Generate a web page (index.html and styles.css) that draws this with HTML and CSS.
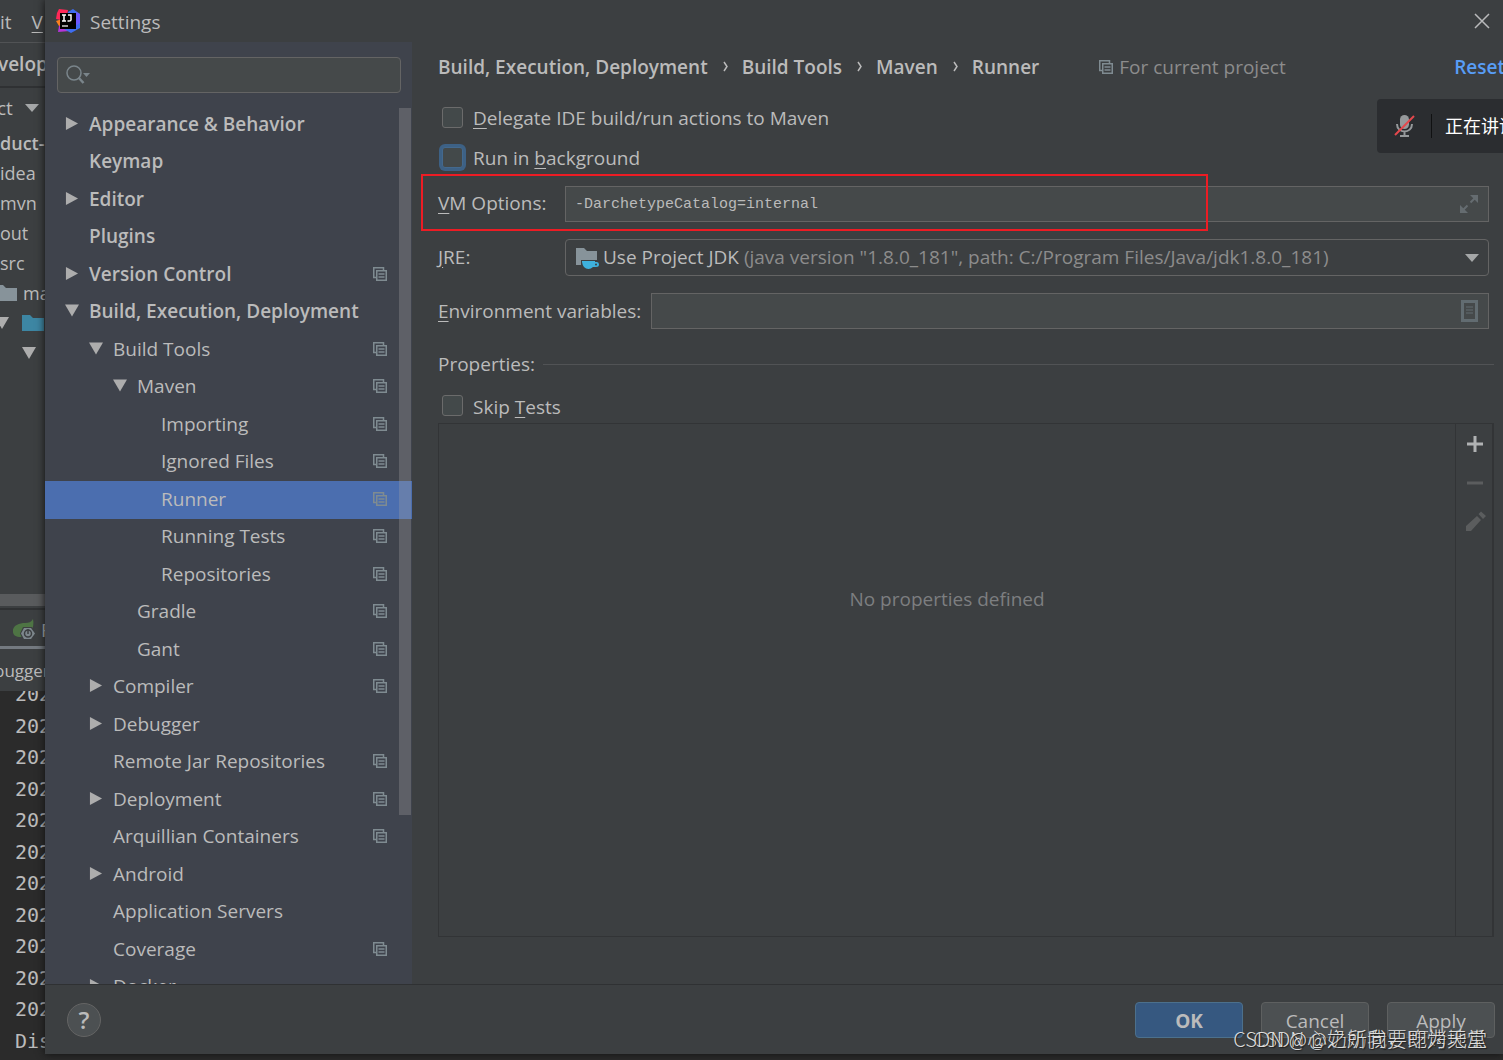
FILE: index.html
```html
<!DOCTYPE html>
<html lang="en">
<head>
<meta charset="utf-8">
<title>Settings</title>
<link rel="stylesheet" href="styles.css">
</head>
<body>
<svg class="defs" aria-hidden="true">
  <symbol id="i-right" viewBox="0 0 13 14"><path d="M0 0L13 7L0 14Z" fill="#adadad"/></symbol>
  <symbol id="i-down" viewBox="0 0 14 12"><path d="M0 0H14L7 12Z" fill="#adadad"/></symbol>
  <symbol id="i-small-down" viewBox="0 0 14 8"><path d="M0 0H14L7 8Z" fill="#a5a7a8"/></symbol>
  <symbol id="i-copy" viewBox="0 0 14 14"><path d="M3.500 10.500H.75V.75H10.500V3.500M3.750 3.750H13.250V13.250H3.750ZM5.500 7H11.500M5.500 10H11.500" fill="none" stroke="#7f8b91" stroke-width="1.500"/></symbol>
  <symbol id="i-folder" viewBox="0 0 22 16"><path d="M0 0H8L11 3H22V16H0Z"/></symbol>
</svg>
<div class="app">
  <div class="ide" aria-hidden="true">
    <div class="menu"><span>it</span><u>V</u></div>
    <div class="crumb">velop</div>
    <div class="project">
      <div class="tool-title"><span>ct</span><svg width="14" height="8"><use href="#i-small-down"/></svg></div>
      <div class="file bold">duct-</div>
      <div class="file">idea</div>
      <div class="file">mvn</div>
      <div class="file">out</div>
      <div class="file">src</div>
      <div class="file"><svg class="gray-folder" width="17" height="16" viewBox="5 0 17 16"><path d="M0 0H8L11 3H22V16H0Z"/></svg><span class="after">ma</span></div>
      <div class="file"><svg width="9" height="12" viewBox="5 0 9 12"><path d="M0 0H14L7 12Z" fill="#adadad"/></svg><svg class="blue-folder" width="22" height="16"><use href="#i-folder"/></svg></div>
      <div class="file deep"><svg width="14" height="12"><use href="#i-down"/></svg></div>
    </div>
    <div class="hscroll"></div>
    <div class="run-tab">
      <svg width="24" height="22" viewBox="0 0 24 22"><path d="M1 13C0 6 8 4 13 4C17 4 19 3 21 0C23 9 18 18 9 18C4 18 1 16 1 13Z" fill="#4e7444"/><path d="M11 8H20L24 14.500L20 21H11L8 14.500Z" fill="#3c3f41"/><path d="M12 9H19L23 14.500L19 20H12L9 14.500Z" fill="#7d878c"/><circle cx="16" cy="14.500" r="3.500" fill="none" stroke="#3c3f41" stroke-width="1.500"/><path d="M16 10V15" stroke="#3c3f41" stroke-width="1.500"/></svg>
      <span>F</span>
    </div>
    <div class="debugger">bugger</div>
    <div class="console">
      <div>202</div><div>202</div><div>202</div><div>202</div><div>202</div><div>202</div><div>202</div><div>202</div><div>202</div><div>202</div><div>202</div><div>Dis</div>
    </div>
  </div>

  <main class="dialog">
    <header class="titlebar">
      <svg width="24" height="24" viewBox="0 0 24 24"><path d="M3 0L12 1L10 12L0 10L1 4Z" fill="#fe2857"/><path d="M0 12L6 10L6 18L3 17Z" fill="#fc801d"/><path d="M3 17L10 14L14 22L2 23Z" fill="#b635d8"/><path d="M12 3L17 0L24 5V19L15 24L8 20Z" fill="#3e6df0"/><path d="M20 3L24 5V14L19 17Z" fill="#6b57ff"/><path d="M4 4H20V20H4Z" fill="#000"/><path d="M6 6H10M8 6V12M6 12H10M12 6H15V11Q15 12 13 12H11.500" fill="none" stroke="#fff" stroke-width="1.500"/><path d="M6 17H12" stroke="#ccc" stroke-width="1.500"/></svg>
      <h1>Settings</h1>
      <button class="close" aria-label="Close"><svg width="16" height="16" viewBox="0 0 16 16"><path d="M1 1L15 15M15 1L1 15" stroke="#b9babb" stroke-width="1.500"/></svg></button>
    </header>

    <div class="body">
      <nav class="sidebar" aria-label="Settings categories">
        <div class="search">
          <svg width="26" height="20" viewBox="0 0 26 20"><circle cx="8" cy="8" r="7" fill="none" stroke="#7a858b" stroke-width="1.500"/><path d="M12.500 12.500L17.500 18" stroke="#7a858b" stroke-width="2.500"/><path d="M17 8H24L20.500 12Z" fill="#7a858b"/></svg>
          <input type="text" aria-label="Search settings">
        </div>
        <ul class="tree">
          <li class="top"><svg class="arrow"><use href="#i-right"/></svg><span>Appearance &amp; Behavior</span></li>
          <li class="top"><i class="arrow"></i><span>Keymap</span></li>
          <li class="top"><svg class="arrow"><use href="#i-right"/></svg><span>Editor</span></li>
          <li class="top"><i class="arrow"></i><span>Plugins</span></li>
          <li class="top"><svg class="arrow"><use href="#i-right"/></svg><span>Version Control</span><svg class="copy"><use href="#i-copy"/></svg></li>
          <li class="top"><svg class="arrow"><use href="#i-down"/></svg><span>Build, Execution, Deployment</span></li>
          <li class="l1"><svg class="arrow"><use href="#i-down"/></svg><span>Build Tools</span><svg class="copy"><use href="#i-copy"/></svg></li>
          <li class="l2"><svg class="arrow"><use href="#i-down"/></svg><span>Maven</span><svg class="copy"><use href="#i-copy"/></svg></li>
          <li class="l3"><i class="arrow"></i><span>Importing</span><svg class="copy"><use href="#i-copy"/></svg></li>
          <li class="l3"><i class="arrow"></i><span>Ignored Files</span><svg class="copy"><use href="#i-copy"/></svg></li>
          <li class="l3 selected"><i class="arrow"></i><span>Runner</span><svg class="copy"><use href="#i-copy"/></svg></li>
          <li class="l3"><i class="arrow"></i><span>Running Tests</span><svg class="copy"><use href="#i-copy"/></svg></li>
          <li class="l3"><i class="arrow"></i><span>Repositories</span><svg class="copy"><use href="#i-copy"/></svg></li>
          <li class="l2"><i class="arrow"></i><span>Gradle</span><svg class="copy"><use href="#i-copy"/></svg></li>
          <li class="l2"><i class="arrow"></i><span>Gant</span><svg class="copy"><use href="#i-copy"/></svg></li>
          <li class="l1"><svg class="arrow"><use href="#i-right"/></svg><span>Compiler</span><svg class="copy"><use href="#i-copy"/></svg></li>
          <li class="l1"><svg class="arrow"><use href="#i-right"/></svg><span>Debugger</span></li>
          <li class="l1"><i class="arrow"></i><span>Remote Jar Repositories</span><svg class="copy"><use href="#i-copy"/></svg></li>
          <li class="l1"><svg class="arrow"><use href="#i-right"/></svg><span>Deployment</span><svg class="copy"><use href="#i-copy"/></svg></li>
          <li class="l1"><i class="arrow"></i><span>Arquillian Containers</span><svg class="copy"><use href="#i-copy"/></svg></li>
          <li class="l1"><svg class="arrow"><use href="#i-right"/></svg><span>Android</span></li>
          <li class="l1"><i class="arrow"></i><span>Application Servers</span></li>
          <li class="l1"><i class="arrow"></i><span>Coverage</span><svg class="copy"><use href="#i-copy"/></svg></li>
          <li class="l1"><svg class="arrow"><use href="#i-right"/></svg><span>Docker</span></li>
        </ul>
        <div class="thumb"></div>
      </nav>

      <section class="content">
        <div class="path">
          <b>Build, Execution, Deployment</b><svg class="sep" viewBox="0 0 6 12"><path d="M1 1L4 5.500L1 10" /></svg>
          <b>Build Tools</b><svg class="sep" viewBox="0 0 6 12"><path d="M1 1L4 5.500L1 10" /></svg>
          <b>Maven</b><svg class="sep" viewBox="0 0 6 12"><path d="M1 1L4 5.500L1 10" /></svg>
          <b>Runner</b>
          <span class="scope"><svg width="14" height="14"><use href="#i-copy"/></svg>For current project</span>
          <a class="reset" href="#">Reset</a>
        </div>
        <label class="check"><input type="checkbox"><span><u>D</u>elegate IDE build/run actions to Maven</span></label>
        <label class="check focus"><input type="checkbox"><span>Run in <u>b</u>ackground</span></label>

        <div class="row vm">
          <label class="name" for="vm"><u>V</u>M Options:</label>
          <div class="field"><input id="vm" class="mono" type="text" value="-DarchetypeCatalog=internal"><svg width="18" height="18" viewBox="0 0 18 18"><path d="M10 0H18V8ZM0 10L8 18H0Z" fill="#656c70"/><path d="M15 3L10.500 7.500M3 15L7.500 10.500" stroke="#656c70" stroke-width="2"/></svg></div>
        </div>
        <div class="row jre">
          <label class="name" for="jre"><u>J</u>RE:</label>
          <button id="jre" class="combo" aria-haspopup="listbox"><svg width="23" height="22" viewBox="0 0 23 22"><path d="M0 1H8L11 4H21V13H5V18H0Z" fill="#87939a"/><path d="M6 14H19V15H21Q23 15 23 17.500T20 20H17Q15 22 12.500 22Q7 22 6 15Z" fill="#3eb1dd"/><circle cx="20" cy="17.500" r="1" fill="#3c3f41"/></svg><span>Use Project JDK <em>(java version "1.8.0_181", path: C:/Program Files/Java/jdk1.8.0_181)</em></span><svg class="caret" width="14" height="8"><use href="#i-small-down"/></svg></button>
        </div>
        <div class="row env">
          <label class="name" for="env"><u>E</u>nvironment variables:</label>
          <div class="field"><input id="env" type="text"><svg width="17" height="22" viewBox="0 0 17 22"><path d="M1.500 1.500H15.500V20.500H1.500Z" fill="none" stroke="#626c71" stroke-width="3"/><path d="M5 7H12M5 10H12M5 13H12" stroke="#626c71"/></svg></div>
        </div>
        <h2 class="group">Properties:</h2>
        <label class="check skip"><input type="checkbox"><span>Skip <u>T</u>ests</span></label>
        <div class="props">
          <div class="empty">No properties defined</div>
          <div class="tools">
            <button aria-label="Add"><svg width="22" height="22" viewBox="0 0 22 22"><path d="M3 11H19M11 3V19" stroke="#b0b2b3" stroke-width="3"/></svg></button>
            <button aria-label="Remove" disabled><svg width="22" height="22" viewBox="0 0 22 22"><path d="M3 11H19" stroke="#5b5d5e" stroke-width="3"/></svg></button>
            <button aria-label="Edit" disabled><svg width="22" height="22" viewBox="0 0 22 22"><path d="M2 15L13 5L17 9L7 20H2ZM14.500 3L17 0.500L22 5L19 8Z" fill="#5b5d5e"/></svg></button>
          </div>
        </div>
      </section>
    </div>

    <footer class="footer">
      <button class="help" aria-label="Help">?</button>
      <button class="btn ok">OK</button>
      <button class="btn">Cancel</button>
      <button class="btn"><u>A</u>pply</button>
    </footer>
  </main>

  <div class="marker"></div>
  <aside class="meeting">
    <svg width="22" height="24" viewBox="0 0 22 24"><rect x="6" y="1" width="9" height="14" rx="4.500" fill="#96999b"/><path d="M3 10C3 20 18 20 18 10M10.500 17V21M6 22H15" fill="none" stroke="#96999b" stroke-width="2"/><path d="M1 21L20 2" stroke="#e5484d" stroke-width="2"/></svg>
    <span>正在讲话</span>
  </aside>
  <div class="watermark">CSDN @奶奶我要吃烤地瓜</div>
  <div class="watermark">CSDN @心之所向，即为天堂</div>
</div>
</body>
</html>
```
FILE: styles.css
```css
* { box-sizing: border-box; }
body {
  margin: 0;
  background: #2b2b2b;
  color: #bbbbbb;
  font: 19px/24px "Open Sans", "Noto Sans CJK SC", sans-serif;
}
h1, h2 { margin: 0; font: inherit; }
button, input { font: inherit; color: inherit; margin: 0; }
button { padding: 0; border: 0; background: none; }
svg { flex: none; display: block; }
u { text-underline-offset: 3px; }
.defs { position: absolute; width: 0; height: 0; }

.app {
  position: relative;
  display: flex;
  height: 100vh;
  min-height: 700px;
  overflow: hidden;
}

/* Editor window behind the dialog */
.ide {
  flex: none;
  width: 45px;
  overflow: hidden;
  display: flex;
  flex-direction: column;
  white-space: nowrap;
  background: #3c3f41;
}
.ide > * { flex: none; }
.menu { display: flex; gap: 20px; height: 43px; padding-top: 10px; border-bottom: 1px solid #515355; }
.crumb { height: 45px; margin-left: -2px; padding-top: 9px; border-bottom: 2px solid #2f3133; font-weight: 600; }
.project { height: 506px; padding-top: 5px; }
.tool-title { display: flex; align-items: center; gap: 12px; height: 35px; margin-left: -3px; padding-bottom: 5px; }
.file { display: flex; align-items: center; height: 30px; font-size: 18px; }
.bold { font-weight: 600; }
.after { margin-left: 6px; }
.deep { padding-left: 22px; }
.gray-folder { fill: #87939a; }
.blue-folder { fill: #3d86a3; margin-left: 13px; }
.hscroll { height: 16px; background: #3c3f41; border-top: 12px solid #595b5d; border-bottom: 2px solid #2f3133; }
.run-tab { display: flex; align-items: center; gap: 5px; height: 39px; padding: 4px 0 0 12px; border-bottom: 3px solid #747a80; }
.debugger { height: 42px; margin-left: -6px; padding-top: 10px; font-size: 17px; }
.console { height: 369px; overflow: hidden; padding-left: 15px; background: #2b2b2b; font: 20px/32px "DejaVu Sans Mono", monospace; }
.console div { height: 32px; }
.console div:nth-child(even) { height: 31px; }
.console div:first-child { margin-top: -13px; }

.dialog {
  flex: 1;
  min-width: 0;
  display: flex;
  flex-direction: column;
  margin-bottom: 6px;
  background: #3c3f41;
  box-shadow: 0 0 8px #111;
}
.titlebar { display: flex; align-items: center; flex: none; height: 42px; padding: 0 13px 0 11px; }
.titlebar h1 { margin-left: 10px; padding-top: 1px; }
.close { margin-left: auto; }
.body { flex: 1; min-height: 0; display: flex; }

.sidebar {
  position: relative;
  flex: none;
  width: 367px;
  display: flex;
  flex-direction: column;
  overflow: hidden;
  background: #3f434c;
}
.search {
  display: flex;
  align-items: center;
  flex: none;
  height: 36px;
  margin: 15px 11px 13px 12px;
  padding-left: 8px;
  border: 1px solid #646464;
  border-radius: 4px;
  background: #45494a;
}
.search input { flex: 1; min-width: 0; border: 0; background: none; outline: 0; }
.tree { list-style: none; margin: 0; padding: 0; }
.tree li { display: flex; align-items: center; height: 37px; padding-right: 25px; padding-bottom: 3px; white-space: nowrap; }
.tree li:nth-child(odd) { height: 38px; padding-bottom: 2px; }
.tree .arrow { flex: none; width: 14px; height: 13px; margin: 0 10px 2px 0; }
.tree .copy { width: 14px; height: 14px; margin-left: auto; }
.tree .top { padding-left: 20px; font-weight: 600; }
.tree .l1 { padding-left: 44px; }
.tree .l2 { padding-left: 68px; }
.tree .l3 { padding-left: 92px; }
.selected { background: #4b6eaf; }
.thumb { position: absolute; right: 1px; top: 66px; width: 12px; height: 75%; background: rgba(166, 166, 166, .3); }

.content {
  flex: 1;
  min-width: 0;
  display: flex;
  flex-direction: column;
  padding: 13px 9px 47px 26px;
}
.path { display: flex; align-items: center; height: 24px; margin-bottom: 19px; white-space: nowrap; }
.path b { font-weight: 600; }
.sep { width: 6px; height: 12px; margin: 0 13px 0 15px; fill: none; stroke: #bbbbbb; stroke-width: 1.5; }
.scope { display: flex; align-items: center; gap: 6px; margin-left: 60px; color: #8c8c8c; }
.reset { margin-left: auto; margin-right: -11px; color: #589df6; font-weight: 600; text-decoration: none; }
.check { display: flex; align-items: center; align-self: flex-start; gap: 10px; height: 40px; padding-left: 4px; }
.check input {
  appearance: none;
  width: 21px;
  height: 21px;
  margin-bottom: 2px;
  border: 1px solid #6b6b6b;
  border-radius: 3px;
  background: #43494a;
}
.focus input { box-shadow: 0 0 0 3px #3d6185; border-color: #43698e; }
.row { display: flex; align-items: center; margin-right: 5px; }
.name { flex: none; width: 127px; padding-bottom: 2px; white-space: nowrap; }
.field, .combo {
  flex: 1;
  min-width: 0;
  display: flex;
  align-items: center;
  height: 36px;
  border: 1px solid #646464;
}
.field { background: #45494a; padding-right: 10px; }
.field input { flex: 1; min-width: 0; padding: 0 9px; border: 0; background: none; outline: 0; }
.field .mono { padding-top: 2px; font: 15px/24px "Liberation Mono", monospace; }
.vm { margin-top: 8px; }
.jre { margin-top: 17px; }
.env { margin-top: 17px; }
.env .name { width: 213px; padding-bottom: 0; }
.combo { height: 37px; padding: 0 9px 0 10px; border-radius: 4px; text-align: left; white-space: nowrap; }
.combo span { margin-left: 4px; padding-bottom: 2px; }
.combo em { font-style: normal; color: #8c8c8c; }
.caret { margin-left: auto; }
.group { display: flex; align-items: center; gap: 8px; margin: 23px 0 14px; }
.group::after { content: ""; flex: 1; height: 1px; background: #515355; }
.skip { height: 33px; }
.props { flex: 1; display: flex; border: 1px solid #323436; border-right-width: 2px; }
.empty { flex: 1; padding-top: 163px; text-align: center; color: #7c7e80; }
.tools { width: 37px; padding: 9px 0 0 2px; display: flex; flex-direction: column; align-items: center; gap: 17px; border-left: 1px solid #323436; }

.footer {
  flex: none;
  display: flex;
  align-items: center;
  gap: 18px;
  height: 70px;
  padding: 0 8px 0 22px;
  border-top: 1px solid #2f3133;
}
.help { width: 34px; height: 34px; margin-right: auto; border: 1px solid #646464; border-radius: 50%; background: #4c5052; font-size: 24px; font-weight: 600; }
.btn { width: 108px; height: 36px; padding-top: 2px; border: 1px solid #5e6060; border-radius: 4px; background: #4c5052; }
.ok { background: #365880; border-color: #4c708c; font-weight: 700; }

/* Overlays */
.marker { position: absolute; left: 421px; top: 174px; width: 787px; height: 57px; border: 2px solid #ed1c24; }
.meeting {
  position: absolute;
  right: 0;
  top: 99px;
  width: 126px;
  height: 54px;
  display: flex;
  align-items: center;
  overflow: hidden;
  padding-left: 17px;
  border-radius: 4px 0 0 4px;
  background: #2b2d30;
  color: #fff;
  font-size: 18px;
  white-space: nowrap;
}
.meeting span { margin-left: 15px; padding-left: 13px; border-left: 1px solid #101112; }
.watermark {
  position: absolute;
  right: 16px;
  bottom: 9px;
  color: #dddddd;
  font: 300 20px/24px "Noto Sans CJK SC", sans-serif;
  text-shadow: 1px 1px 1px #222;
}
```
